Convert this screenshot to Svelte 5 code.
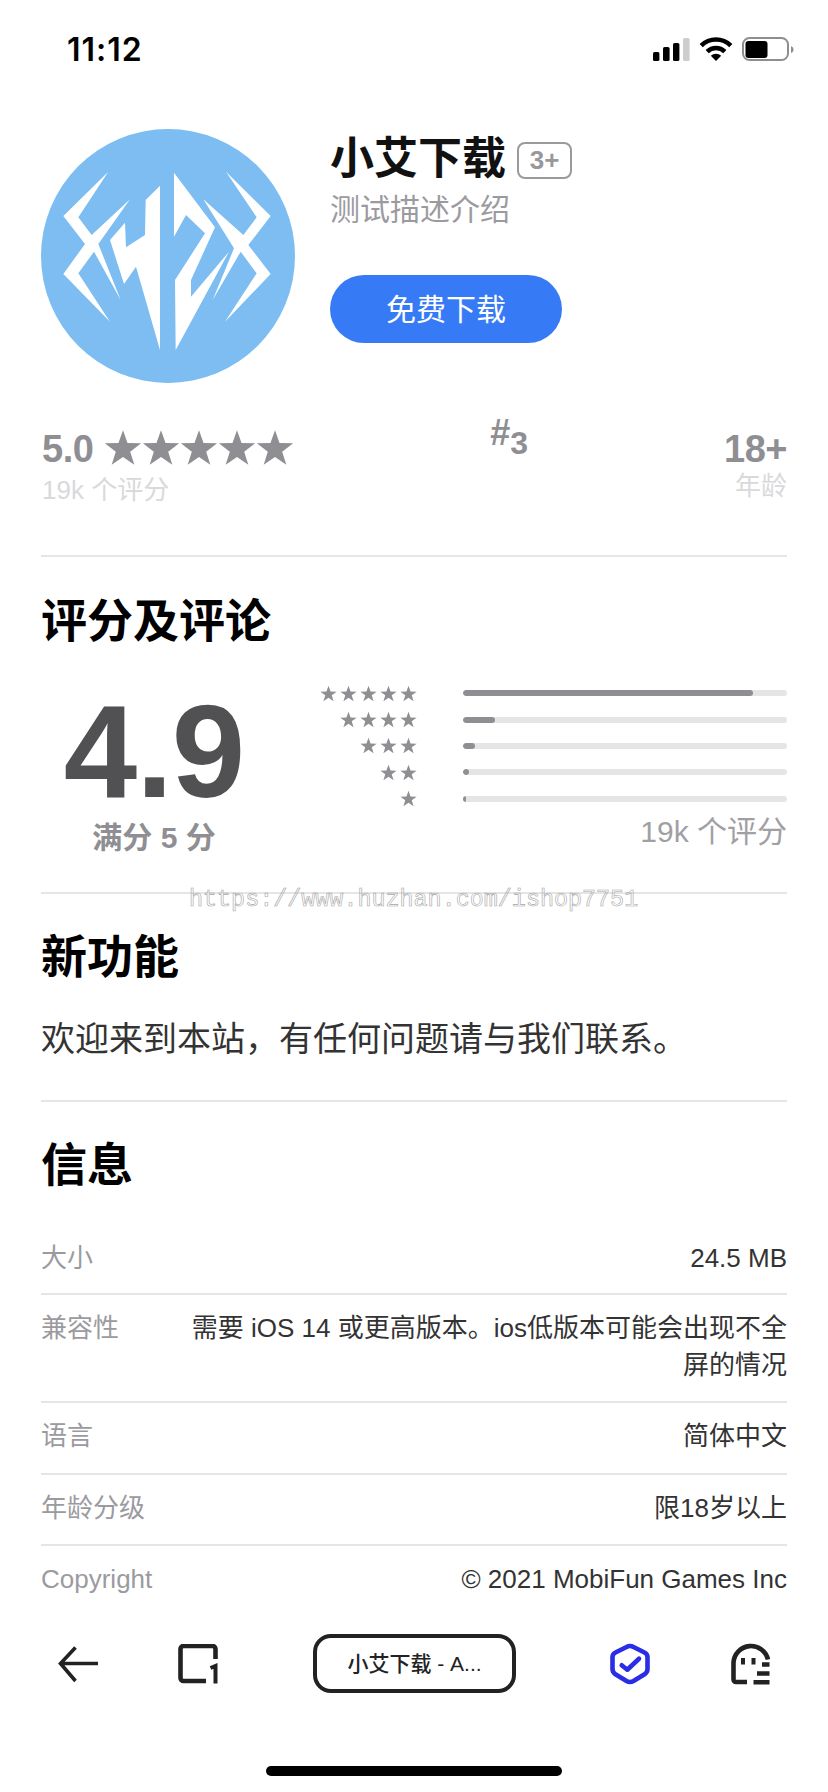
<script>
  const starPts = "50,3 62,37 98,38 69,60 80,95 50,74 20,95 31,60 2,38 38,37";
  const rows = [
    { n: 5, fill: 290 },
    { n: 4, fill: 32 },
    { n: 3, fill: 12 },
    { n: 2, fill: 6 },
    { n: 1, fill: 3 }
  ];
  const info = [
    { k: "大小", v: "24.5 MB" },
    { k: "兼容性", v: "需要 iOS 14 或更高版本。ios低版本可能会出现不全屏的情况" },
    { k: "语言", v: "简体中文" },
    { k: "年龄分级", v: "限18岁以上" },
    { k: "Copyright", v: "© 2021 MobiFun Games Inc" }
  ];
</script>

<div class="page">
  <div class="watermark">https://www.huzhan.com/ishop7751</div>

  <header class="status">
    <span class="time">11:12</span>
    <div class="sys">
      <svg class="signal" width="37" height="23" viewBox="0 0 37 23">
        <rect x="0" y="14" width="6.4" height="9" rx="1.6" fill="#000" />
        <rect x="10" y="9" width="6.6" height="14" rx="1.6" fill="#000" />
        <rect x="20" y="5" width="6.4" height="18" rx="1.6" fill="#000" />
        <rect x="30" y="0" width="6.6" height="23" rx="1.6" fill="#cdcdcd" />
      </svg>
      <svg class="wifi" width="34" height="24" viewBox="0 0 34 24">
        <path d="M2.2 8.7A21 21 0 0 1 31.8 8.7" fill="none" stroke="#000" stroke-width="4.5" />
        <path d="M8.2 14.7A12.5 12.5 0 0 1 25.8 14.7" fill="none" stroke="#000" stroke-width="4.5" />
        <path d="M17 24L11.8 18.8A7.5 7.5 0 0 1 22.2 18.8Z" fill="#000" />
      </svg>
      <svg class="battery" width="52" height="24" viewBox="0 0 52 24">
        <rect x="1" y="1" width="45" height="22" rx="6.5" fill="#fff" stroke="#8e8e8e" stroke-width="2" />
        <rect x="3.5" y="4" width="22" height="17" rx="3" fill="#000" />
        <path d="M49 9a5 4 0 0 1 0 7Z" fill="#8e8e8e" />
      </svg>
    </div>
  </header>

  <section class="hero">
    <svg class="icon" width="254" height="254" viewBox="33 27 762 762">
      <circle cx="414" cy="408" r="381" fill="#7dbdf1" />
      <g fill="#fff">
        <polygon points="235,155 100,288 165,372 100,462 240,605 145,460 192,395 272,540 205,372 300,238 185,345 145,292" />
        <polygon points="390,197 347,240 345,345 288,382 285,308 240,360 282,492 318,440 390,690" />
        <polygon points="432,158 555,322 483,480 483,530 597,395 437,690 435,480 525,340 468,285 432,350" />
        <polygon points="588,155 722,288 655,375 722,462 585,605 680,460 632,395 548,540 612,385 520,238 640,345 680,292" />
      </g>
    </svg>
    <div class="meta">
      <div class="title-row">
        <h1>小艾下载</h1>
        <span class="badge">3+</span>
      </div>
      <p class="sub">测试描述介绍</p>
      <button class="get">免费下载</button>
    </div>
  </section>

  <section class="stats">
    <div class="stat-left">
      <div class="score-row">
        <span class="num">5.0</span>
        <div class="big-stars">
          {#each [1, 2, 3, 4, 5] as s (s)}
            <svg width="38" height="37" viewBox="0 0 100 98"><polygon points={starPts} fill="#8e8e93" /></svg>
          {/each}
        </div>
      </div>
      <div class="faint">19k 个评分</div>
    </div>
    <div class="rank"><span class="hash">#</span><span class="three">3</span></div>
    <div class="stat-right">
      <div class="num">18+</div>
      <div class="faint age">年龄</div>
    </div>
  </section>

  <section class="block ratings">
    <h2>评分及评论</h2>
    <div class="rating-body">
      <div class="overall">
        <div class="big">4.9</div>
        <div class="outof">满分 5 分</div>
      </div>
      <div class="dist">
        {#each rows as r (r.n)}
          <div class="dist-row">
            <div class="small-stars">
              {#each Array(r.n) as _, i (i)}
                <svg width="17" height="17" viewBox="0 0 100 98"><polygon points={starPts} fill="#8e8e93" /></svg>
              {/each}
            </div>
            <div class="track"><div class="fill" style="width:{r.fill}px"></div></div>
          </div>
        {/each}
        <div class="count">19k 个评分</div>
      </div>
    </div>
  </section>

  <section class="block whatsnew">
    <h2>新功能</h2>
    <p class="news">欢迎来到本站，有任何问题请与我们联系。</p>
  </section>

  <section class="block infos">
    <h2>信息</h2>
    <dl>
      {#each info as row (row.k)}
        <div class="info-row">
          <dt>{row.k}</dt>
          <dd>{row.v}</dd>
        </div>
      {/each}
    </dl>
  </section>

  <nav class="nav">
    <svg width="42" height="40" viewBox="0 0 42 40">
      <path d="M17.5 3.5L2.5 19.500L17.5 37M3 19.500H40" fill="none" stroke="#222" stroke-width="3.6" />
    </svg>
    <svg width="42" height="40" viewBox="0 0 42 40">
      <path d="M37.5 15V5a3 3 0 0 0-3-3H5.500a3 3 0 0 0-3 3V34a3 3 0 0 0 3 3H28" fill="none" stroke="#222" stroke-width="4.6" />
      <path d="M32.500 24L37.500 22V39.500" fill="none" stroke="#222" stroke-width="4" />
    </svg>
    <div class="pill">小艾下载 - A...</div>
    <svg width="42" height="42" viewBox="0 0 42 42">
      <path d="M16.500 4Q20 2 23.500 4L34.500 9.500Q37.500 11 37.500 14V26Q37.500 29 35 31L23.500 38Q20 40 16.500 38L5 31Q2.500 29 2.500 26V14Q2.500 11 5.500 9.500Z" fill="none" stroke="#2a2de6" stroke-width="4.600" stroke-linejoin="round" />
      <path d="M11.700 22.300L17.300 26.700L29 15.700" fill="none" stroke="#2a2de6" stroke-width="4.600" stroke-linecap="round" stroke-linejoin="round" />
    </svg>
    <svg width="42" height="42" viewBox="0 0 42 42">
      <path d="M16 39H5a2.500 2.500 0 0 1-2.500-2.500V19.500A17.500 17.500 0 0 1 37 16.500" fill="none" stroke="#222" stroke-width="4.600" />
      <path d="M12 15V21.500M22.500 15V21.500" fill="none" stroke="#222" stroke-width="4" />
      <path d="M31 21.500H38.500M26 30.500H38.500M22.500 39.300H38.500" fill="none" stroke="#222" stroke-width="4.400" />
    </svg>
  </nav>
  <div class="home"></div>
</div>

<style>
  :global(body) {
    margin: 0;
    background: #fff;
  }
  .page {
    position: relative;
    width: 828px;
    height: 1792px;
    overflow: hidden;
    display: flex;
    flex-direction: column;
    background: #fff;
    font-family: "Liberation Sans", "Noto Sans CJK SC", sans-serif;
    color: #333;
  }
  .watermark {
    position: absolute;
    left: 189px;
    top: 886px;
    font-family: "Liberation Mono", monospace;
    font-size: 23.4px;
    line-height: 28px;
    color: transparent;
    -webkit-text-stroke: 0.6px #a6a6a6;
    white-space: nowrap;
  }
  .status {
    height: 100px;
    flex: none;
    box-sizing: border-box;
    padding: 0 34px 2px 67px;
    display: flex;
    align-items: center;
    justify-content: space-between;
  }
  .time {
    font-family: Inter, sans-serif;
    font-weight: 600;
    font-size: 32px;
    letter-spacing: 1px;
    color: #000;
  }
  .sys {
    display: flex;
    align-items: center;
    gap: 9px;
  }
  .hero {
    flex: none;
    display: flex;
    gap: 35px;
    padding: 29px 0 0 41px;
  }
  .icon {
    flex: none;
    display: block;
  }
  .meta {
    padding-top: 8px;
  }
  .title-row {
    display: flex;
    align-items: center;
    gap: 11px;
    height: 44px;
  }
  h1 {
    margin: 0;
    font-size: 44px;
    line-height: 44px;
    font-weight: 700;
    color: #111;
  }
  .badge {
    box-sizing: border-box;
    width: 55px;
    height: 37px;
    margin-top: 3px;
    border: 2px solid #9a9a9e;
    border-radius: 8px;
    font-size: 26px;
    font-weight: 700;
    line-height: 33px;
    text-align: center;
    color: #98989c;
  }
  .sub {
    margin: 11px 0 0;
    font-size: 30px;
    line-height: 36px;
    color: #9b9b9f;
  }
  .get {
    display: block;
    width: 232px;
    height: 68px;
    margin-top: 47px;
    padding: 0 0 5px;
    border: 0;
    border-radius: 34px;
    background: #377af5;
    color: #fff;
    font: inherit;
    font-size: 30px;
  }
  .stats {
    flex: none;
    box-sizing: border-box;
    height: 172px;
    padding: 40px 41px 0 42px;
    display: flex;
    justify-content: space-between;
    align-items: flex-start;
  }
  .score-row {
    display: flex;
    align-items: center;
    gap: 11px;
    height: 48px;
  }
  .num {
    margin-top: 4px;
    font-size: 38px;
    line-height: 44px;
    font-weight: 700;
    letter-spacing: -0.5px;
    color: #8e8e93;
  }
  .big-stars {
    display: flex;
    width: 190px;
  }
  .big-stars svg {
    display: block;
    flex: none;
  }
  .faint {
    margin-top: 2px;
    font-size: 26px;
    line-height: 34px;
    color: #d9d9db;
  }
  .age {
    margin-top: -2px;
  }
  .rank {
    display: flex;
    align-items: flex-start;
    font-weight: 700;
    color: #8e8e93;
  }
  .hash {
    font-size: 36px;
    line-height: 36px;
    margin-top: -8px;
  }
  .three {
    font-size: 32px;
    line-height: 32px;
    margin-top: 4px;
  }
  .stat-right {
    text-align: right;
  }
  .block {
    flex: none;
    margin: 0 41px;
    border-top: 2px solid #e5e5e6;
  }
  h2 {
    margin: 0;
    font-size: 46px;
    line-height: 50px;
    font-weight: 700;
    color: #000;
  }
  .ratings {
    padding: 39px 0 36px;
  }
  .rating-body {
    display: flex;
    margin-top: 34px;
  }
  .overall {
    width: 226px;
    flex: none;
    text-align: center;
    padding-top: 12px;
  }
  .big {
    font-size: 132px;
    line-height: 120px;
    font-weight: 700;
    letter-spacing: -1px;
    color: #515154;
  }
  .outof {
    margin-top: 8px;
    font-size: 30px;
    line-height: 36px;
    font-weight: 700;
    color: #8e8e93;
  }
  .dist {
    flex: 1;
    min-width: 0;
  }
  .dist-row {
    display: flex;
    align-items: center;
    gap: 46px;
    height: 26.4px;
  }
  .small-stars {
    width: 150px;
    flex: none;
    display: flex;
    justify-content: flex-end;
    gap: 3px;
  }
  .small-stars svg {
    display: block;
  }
  .track {
    flex: 1;
    height: 6px;
    border-radius: 3px;
    background: #e5e5e6;
    overflow: hidden;
  }
  .fill {
    height: 100%;
    border-radius: 3px;
    background: #8e8e93;
  }
  .count {
    margin-top: 2px;
    font-size: 30px;
    line-height: 36px;
    text-align: right;
    color: #a0a0a4;
  }
  .whatsnew {
    padding: 38px 0 36px;
  }
  .news {
    margin: 32px 0 0;
    font-size: 34px;
    line-height: 50px;
    color: #333;
  }
  .infos {
    padding-top: 38px;
  }
  dl {
    margin: 35px 0 0;
  }
  .info-row {
    display: flex;
    justify-content: space-between;
    gap: 60px;
    padding: 15px 0 18px;
    border-top: 2px solid #e5e5e6;
    font-size: 26px;
    line-height: 36.5px;
  }
  .info-row:first-child {
    border-top: 0;
    padding-bottom: 16.5px;
  }
  dt {
    flex: none;
    color: #9b9b9f;
  }
  dd {
    margin: 0;
    text-align: right;
    color: #333;
  }
  .nav {
    position: absolute;
    left: 0;
    right: 0;
    top: 1634px;
    height: 59px;
    padding-left: 58px;
    display: grid;
    grid-template-columns: 120px 135px 297px 121px 42px;
    align-items: center;
    background: #fff;
  }
  .nav svg {
    display: block;
  }
  .pill {
    box-sizing: border-box;
    width: 203px;
    height: 59px;
    border: 4px solid #222;
    border-radius: 18px;
    font-size: 21px;
    font-weight: 500;
    line-height: 51px;
    text-align: center;
    color: #222;
  }
  .home {
    position: absolute;
    left: 266px;
    top: 1766px;
    width: 296px;
    height: 10px;
    border-radius: 5px;
    background: #000;
  }
</style>
